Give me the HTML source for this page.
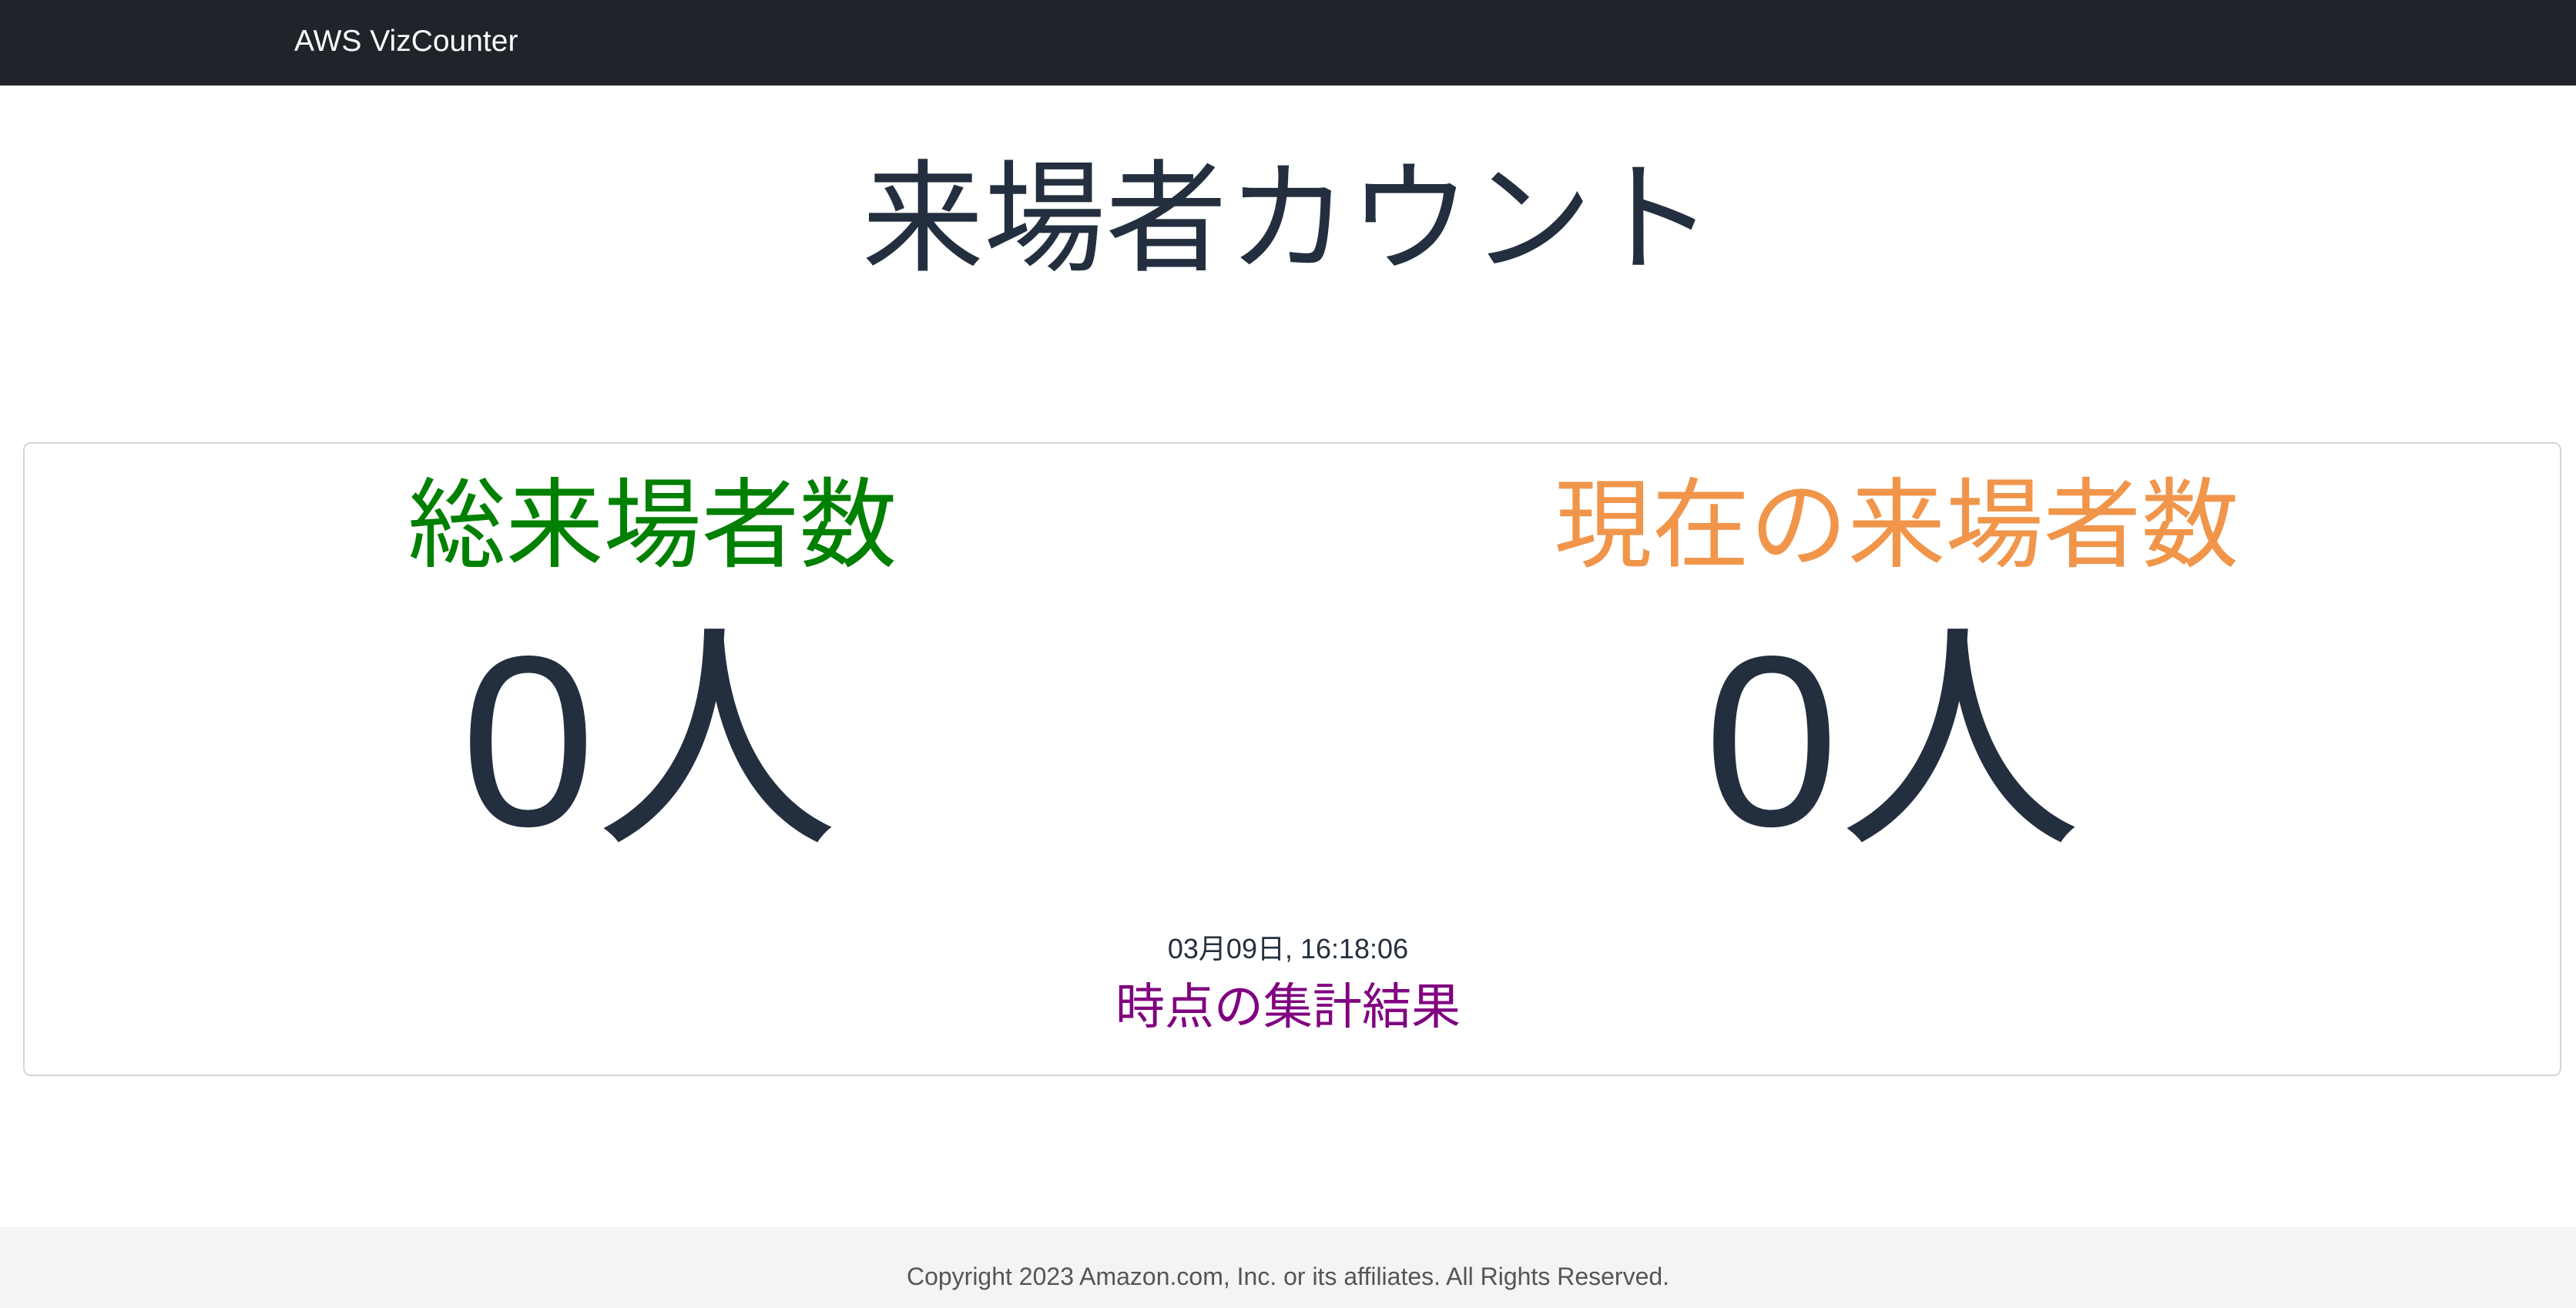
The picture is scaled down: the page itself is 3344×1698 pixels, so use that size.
<!DOCTYPE html>
<html><head><meta charset="utf-8"><style>
*{margin:0;padding:0;box-sizing:border-box}
body{width:3344px;height:1698px;background:#fff;font-family:"Liberation Sans","Noto Sans CJK JP",sans-serif;position:relative;overflow:hidden;color:#232f3e}
.nav{position:absolute;left:0;top:0;width:3344px;height:111px;background:#202329}
.nav span{position:absolute;left:382px;top:30px;font-size:39px;color:#fff;line-height:48px}
.title{position:absolute;left:0;width:3344px;top:175px;text-align:center;font-size:158px;line-height:220px;color:#232f3e}
.card{position:absolute;left:30px;top:574px;width:3295px;height:823px;border:2px solid #d5d5d5;border-radius:10px}
.h{position:absolute;font-size:127px;line-height:160px;text-align:center;width:1400px}
.n{position:absolute;font-size:315px;line-height:360px;text-align:center;width:1400px;color:#232f3e}
.ts{position:absolute;left:0;width:3344px;top:1208px;text-align:center;font-size:36px;line-height:48px}
.res{position:absolute;left:0;width:3344px;top:1264px;text-align:center;font-size:64px;line-height:86px;color:#800080}
.foot{position:absolute;left:0;top:1593px;width:3344px;height:105px;background:#f4f4f4;text-align:center;font-size:32px;line-height:40px;color:#555;padding-top:44px}
</style></head><body>
<div class="nav"><span>AWS VizCounter</span></div>
<div class="title">来場者カウント</div>
<div class="card"></div>
<div class="h" style="left:147px;top:602px;color:#008000">総来場者数</div>
<div class="h" style="left:1762px;top:602px;color:#f0954a">現在の来場者数</div>
<div class="n" style="left:143px;top:782px">0人</div>
<div class="n" style="left:1757px;top:782px">0人</div>
<div class="ts">03月09日, 16:18:06</div>
<div class="res">時点の集計結果</div>
<div class="foot">Copyright 2023 Amazon.com, Inc. or its affiliates. All Rights Reserved.</div>
</body></html>
